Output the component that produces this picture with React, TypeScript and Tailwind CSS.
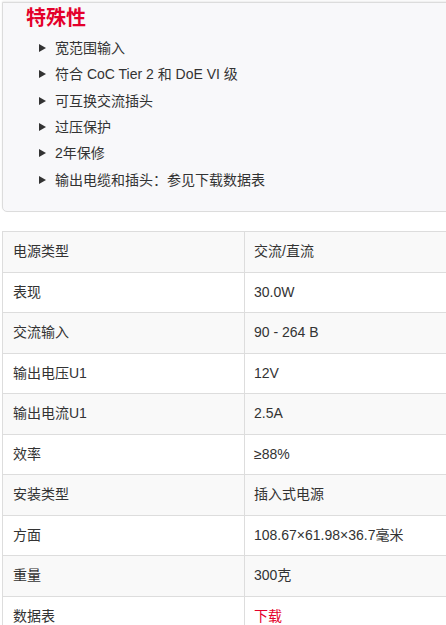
import React from "react";

const features = [
  "宽范围输入",
  "符合 CoC Tier 2 和 DoE VI 级",
  "可互换交流插头",
  "过压保护",
  "2年保修",
  "输出电缆和插头：参见下载数据表",
];

const specs: { label: string; value: string; link?: boolean }[] = [
  { label: "电源类型", value: "交流/直流" },
  { label: "表现", value: "30.0W" },
  { label: "交流输入", value: "90 - 264 B" },
  { label: "输出电压U1", value: "12V" },
  { label: "输出电流U1", value: "2.5A" },
  { label: "效率", value: "≥88%" },
  { label: "安装类型", value: "插入式电源" },
  { label: "方面", value: "108.67×61.98×36.7毫米" },
  { label: "重量", value: "300克" },
  { label: "数据表", value: "下载", link: true },
];

const font = {
  fontFamily: '"Liberation Sans", Arial, "Noto Sans CJK SC", sans-serif',
};

export default function App() {
  return (
    <div
      className="w-[446px] h-[625px] overflow-hidden bg-white text-[#333] text-[14px]"
      style={font}
    >
      <div className="ml-[2px] w-[460px] mt-[2px] h-[210px] bg-[#f8f8fa] border border-[#dcdcdc] rounded-b-[5px] shadow-[0_-1px_2px_rgba(0,0,0,0.08)]">
        <h2 className="pl-[23px] pt-[2px] text-[20px] leading-[26px] font-bold text-[#e4002b]">
          特殊性
        </h2>
        <ul className="pl-[36px] pt-[4px] flex flex-col">
          {features.map((f) => (
            <li key={f} className="flex items-center h-[26.3px] leading-[20px]">
              <span className="w-0 h-0 border-y-[4px] border-y-transparent border-l-[7px] border-l-[#333] mr-[9px]" />
              <span>{f}</span>
            </li>
          ))}
        </ul>
      </div>
      <div className="ml-[2px] mt-[19px] w-[460px] border-t border-l border-[#ddd]">
        {specs.map((s, i) => (
          <div
            key={s.label}
            className={`flex h-[40.5px] border-b border-[#ddd] ${
              i % 2 === 0 ? "bg-[#f9f9f9]" : "bg-white"
            }`}
          >
            <div className="w-[242px] shrink-0 pl-[10px] flex items-center border-r border-[#ddd]">
              {s.label}
            </div>
            <div
              className={`pl-[9px] flex items-center ${
                s.link ? "text-[#e4002b]" : ""
              }`}
            >
              {s.value}
            </div>
          </div>
        ))}
      </div>
    </div>
  );
}
